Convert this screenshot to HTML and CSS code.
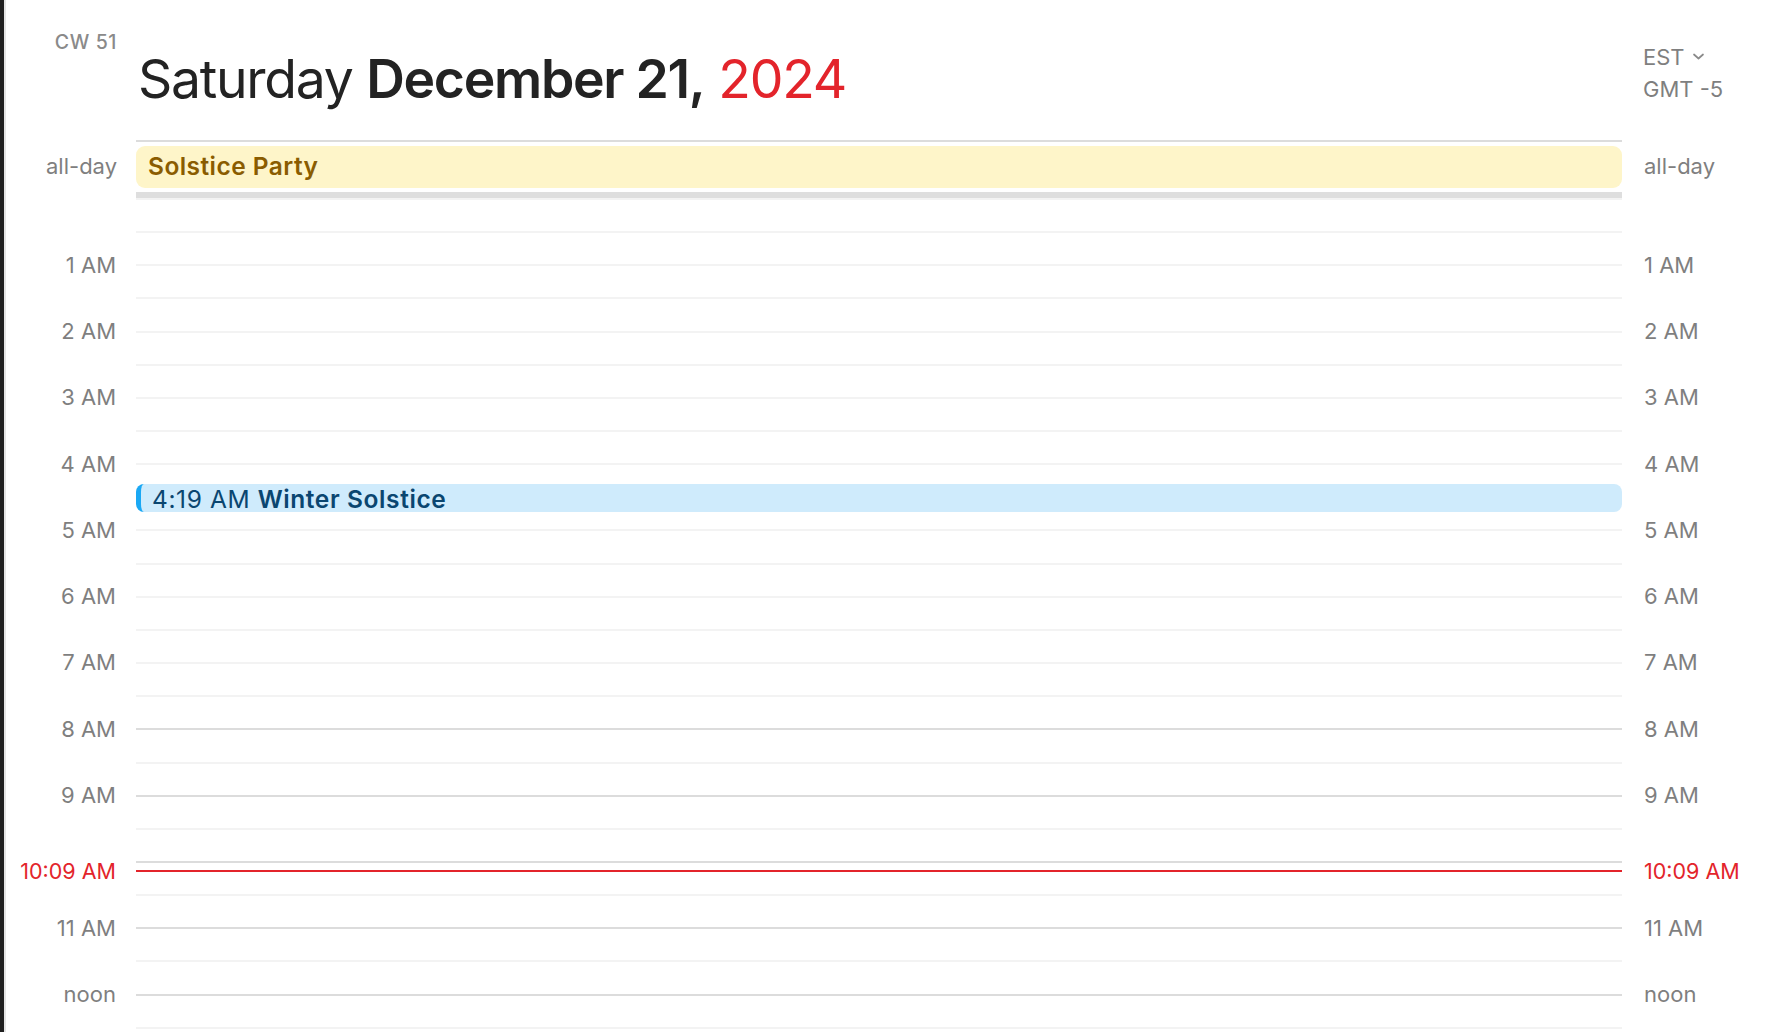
FILE: index.html
```html
<!DOCTYPE html>
<html lang="en">
<head>
<meta charset="utf-8">
<title>Calendar – Saturday December 21, 2024</title>
<link rel="stylesheet" href="styles.css">
</head>
<body>
<div class="app">
  <div class="edge"></div>
  <main class="cal">
    <header class="head">
      <div class="cw">CW 51</div>
      <h1 class="title"><span class="dow">Saturday</span> <span class="date">December 21,</span> <span class="yr">2024</span></h1>
      <div class="tz">
        <div class="tz-name">EST <svg class="chev" width="13" height="9" viewBox="0 0 13 9"><polyline points="2,2.5 6.5,6.5 11,2.5" fill="none" stroke="#8a8a8a" stroke-width="1.7" stroke-linecap="round" stroke-linejoin="round"/></svg></div>
        <div class="tz-off">GMT -5</div>
      </div>
    </header>

    <section class="allday">
      <div class="ad-label left">all-day</div>
      <div class="ad-col">
        <div class="ad-event">Solstice Party</div>
        <div class="ad-bar"></div>
      </div>
      <div class="ad-label right">all-day</div>
    </section>

    <section class="grid">
      <div class="labels left">
        <div class="lbl">1 AM</div>
        <div class="lbl">2 AM</div>
        <div class="lbl">3 AM</div>
        <div class="lbl">4 AM</div>
        <div class="lbl">5 AM</div>
        <div class="lbl">6 AM</div>
        <div class="lbl">7 AM</div>
        <div class="lbl">8 AM</div>
        <div class="lbl">9 AM</div>
        <div class="lbl"></div>
        <div class="lbl">11 AM</div>
        <div class="lbl">noon</div>
      </div>

      <div class="day">
        <div class="hour"><div class="half"></div></div>
        <div class="hour"><div class="half"></div></div>
        <div class="hour"><div class="half"></div></div>
        <div class="hour"><div class="half"></div></div>
        <div class="hour"><div class="half"></div></div>
        <div class="hour"><div class="half"></div></div>
        <div class="hour"><div class="half"></div></div>
        <div class="hour"><div class="half"></div></div>
        <div class="hour work"><div class="half"></div></div>
        <div class="hour work"><div class="half"></div></div>
        <div class="hour work"><div class="half"></div></div>
        <div class="hour work"><div class="half"></div></div>
        <div class="hour work"><div class="half"></div></div>

        <div class="event"><span class="ev-time">4:19 AM</span> <span class="ev-title">Winter Solstice</span></div>
      </div>

      <div class="labels right">
        <div class="lbl">1 AM</div>
        <div class="lbl">2 AM</div>
        <div class="lbl">3 AM</div>
        <div class="lbl">4 AM</div>
        <div class="lbl">5 AM</div>
        <div class="lbl">6 AM</div>
        <div class="lbl">7 AM</div>
        <div class="lbl">8 AM</div>
        <div class="lbl">9 AM</div>
        <div class="lbl"></div>
        <div class="lbl">11 AM</div>
        <div class="lbl">noon</div>
      </div>

      <div class="now">
        <div class="now-lbl left">10:09 AM</div>
        <div class="now-line"></div>
        <div class="now-lbl right">10:09 AM</div>
      </div>
    </section>
  </main>
</div>
</body>
</html>
```

FILE: styles.css
```css
* { box-sizing: border-box; }

html, body {
  margin: 0;
  padding: 0;
  background: #ffffff;
}

body {
  width: 1778px;
  height: 1032px;
  overflow: hidden;
  font-family: "Inter", "Noto Sans", "Liberation Sans", sans-serif;
  color: #262626;
}

.app {
  display: flex;
  height: 1032px;
}

.edge {
  width: 6px;
  flex: none;
  background: #1f1f1f;
  border-right: 2px solid #e4e4e4;
}

.cal {
  flex: 1;
  display: flex;
  flex-direction: column;
}

/* ---------- header ---------- */
.head {
  height: 140px;
  display: grid;
  grid-template-columns: 130px 1486px 1fr;
}

.cw {
  padding-top: 33px;
  padding-right: 19px;
  text-align: right;
  font-size: 19.5px;
  line-height: 19.5px;
  font-weight: 500;
  letter-spacing: 0.6px;
  color: #8a8a8a;
  white-space: nowrap;
}

.title {
  margin: 0;
  padding-top: 52px;
  padding-left: 2px;
  font-size: 53.5px;
  line-height: 53.5px;
  font-weight: 400;
  letter-spacing: -1.3px;
  color: #232323;
  white-space: nowrap;
}

.title .date { font-weight: 600; }
.title .yr { color: #e3242b; }

.tz {
  padding-top: 42px;
  padding-left: 21px;
  font-size: 22px;
  line-height: 31.7px;
  color: #7f7f7f;
}

.tz-name {
  display: flex;
  align-items: center;
  gap: 7px;
}

.chev { margin-top: -3px; }

/* ---------- all-day ---------- */
.allday {
  display: grid;
  grid-template-columns: 130px 1486px 1fr;
}

.ad-col {
  border-top: 2px solid #dcdcdc;
  padding-top: 4px;
}

.ad-event {
  height: 41.5px;
  line-height: 41.5px;
  background: #fef5c9;
  border-radius: 9px;
  padding-left: 12px;
  font-size: 24.5px;
  font-weight: 600;
  letter-spacing: 0.45px;
  color: #8a5c00;
}

.ad-bar {
  margin-top: 4.5px;
  height: 6px;
  background: #dedede;
}

.ad-label {
  padding-top: 6px;
  font-size: 22px;
  line-height: 41.5px;
  color: #7f7f7f;
}

.ad-label.left { text-align: right; padding-right: 19px; }
.ad-label.right { padding-left: 22px; }

/* ---------- time grid ---------- */
.grid {
  position: relative;
  display: grid;
  grid-template-columns: 130px 1486px 1fr;
  flex: 1;
  overflow: hidden;
}

.labels {
  padding-top: 33.65px;
  font-size: 22px;
  color: #7f7f7f;
}

.labels .lbl {
  height: 66.3px;
  line-height: 66.3px;
  white-space: nowrap;
}

.labels.left { text-align: right; padding-right: 20px; }
.labels.right { padding-left: 22px; }

.day {
  position: relative;
}

.hour {
  height: 66.3px;
  border-top: 2px solid #f3f3f3;
  padding-top: 31.15px;
}

.hour.work { border-top-color: #dcdcdc; }

.half {
  height: 2px;
  background: #f3f3f3;
}

.event {
  position: absolute;
  left: 0;
  right: 0;
  top: 286px;
  height: 27.7px;
  background: #cfebfc;
  border-left: 5px solid #1aa8f4;
  border-radius: 8px;
  padding-left: 11px;
  padding-top: 1.5px;
  font-size: 24.5px;
  line-height: 26.2px;
  letter-spacing: 0.6px;
  color: #0a4670;
  white-space: nowrap;
}

.ev-title { font-weight: 600; }

/* current time indicator */
.now {
  position: absolute;
  left: 0;
  right: 0;
  top: 658px;
  height: 30px;
  display: grid;
  grid-template-columns: 130px 1486px 1fr;
  align-items: center;
}

.now-lbl {
  font-size: 21.5px;
  line-height: 30px;
  color: #e3242b;
  white-space: nowrap;
}

.now-lbl.left { text-align: right; padding-right: 20px; }
.now-lbl.right { padding-left: 22px; }

.now-line {
  height: 2px;
  background: #e3242b;
}
```
